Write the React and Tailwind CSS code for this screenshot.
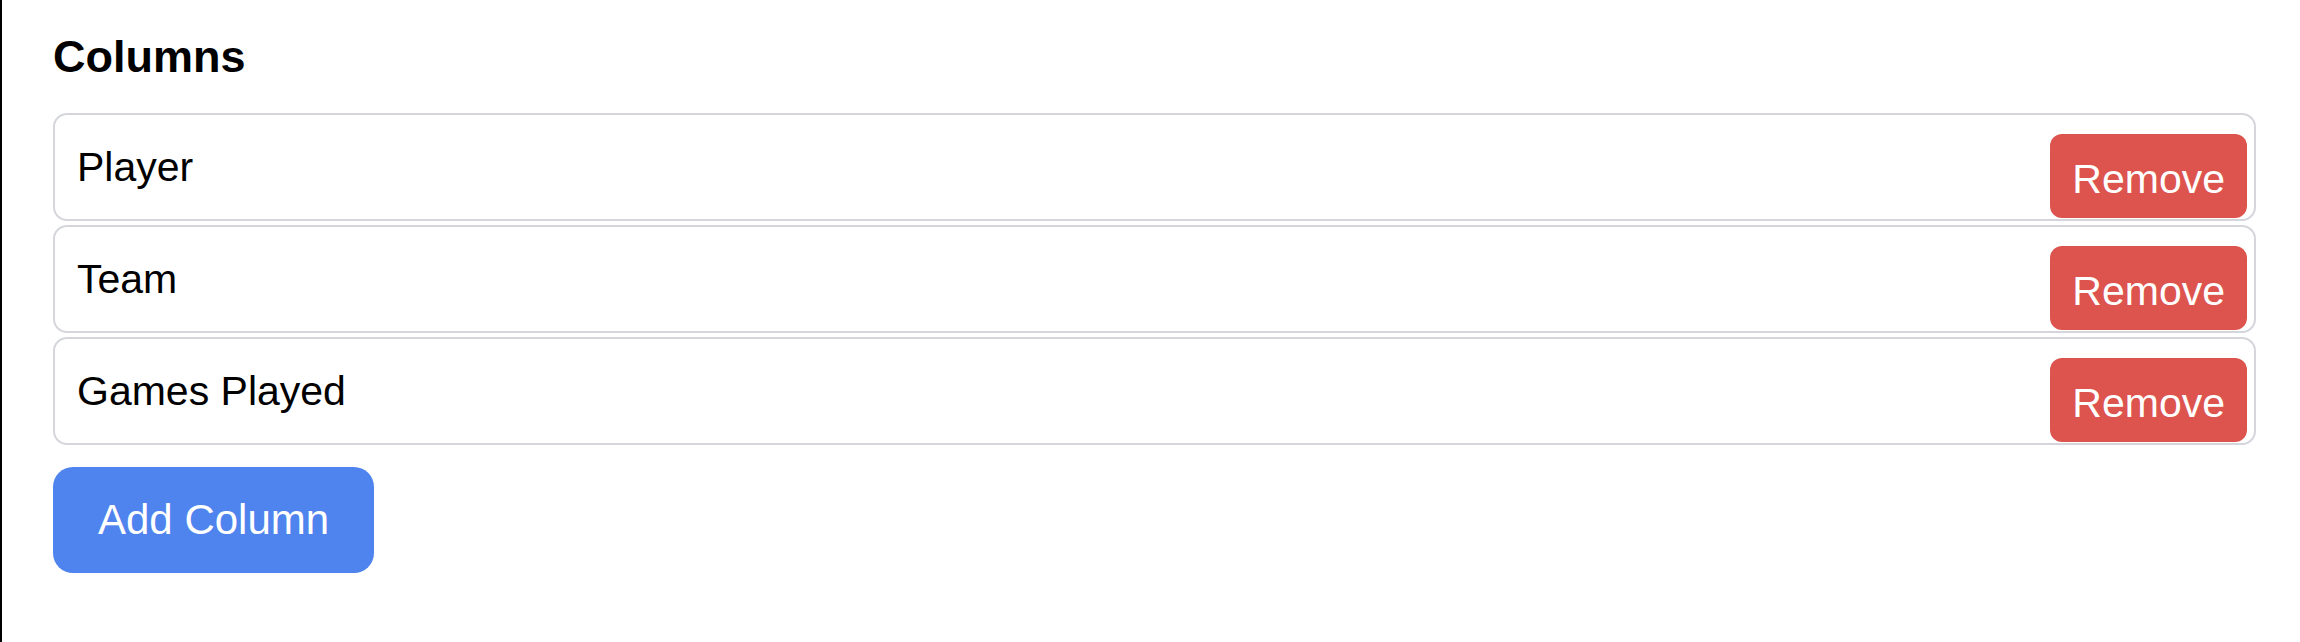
export default function App() {
  const cols = ["Player", "Team", "Games Played"];
  return (
    <div
      className="min-h-[642px] bg-white border-l-2 border-black pl-[51px] pr-[44px] pt-[34px] text-black"
      style={{ fontFamily: '"Liberation Sans", Arial, sans-serif' }}
    >
      <h2 className="text-[45px] leading-[45px] font-bold mb-[34px]">Columns</h2>
      <div className="flex flex-col gap-[4px]">
        {cols.map((c) => (
          <div
            key={c}
            className="flex items-center justify-between h-[108px] border-2 border-[#d4d6db] rounded-[14px] pl-[22px] pr-[7px]"
          >
            <span className="text-[41px] leading-[48px]">{c}</span>
            <button className="self-end mb-[1px] h-[84px] px-[22px] pt-[5px] flex items-center rounded-[12px] bg-[#dd534e] text-white text-[41px] leading-[48px]">
              Remove
            </button>
          </div>
        ))}
      </div>
      <button className="mt-[22px] h-[106px] px-[45px] flex items-center rounded-[20px] bg-[#4f83ee] text-white text-[42px] leading-[48px]">
        Add Column
      </button>
    </div>
  );
}
